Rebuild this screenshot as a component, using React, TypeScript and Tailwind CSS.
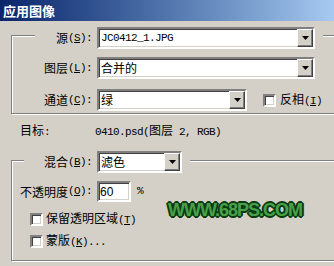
import type { ReactNode } from "react";

const mono = "font-['Liberation_Mono',monospace] text-[11px] tracking-[-0.6px]";
const face = "bg-[#d4d0c8]";
const sunken =
  "border-2 border-t-[#808080] border-l-[#808080] border-b-white border-r-white shadow-[inset_1px_1px_0_#404040,inset_-1px_-1px_0_#d4d0c8] bg-white";

function Hot({ k, tail = ")" }: { k: string; tail?: string }) {
  return (
    <span className={mono}>
      (<span className="underline underline-offset-1">{k}</span>
      {tail}
    </span>
  );
}

function Select({ w, children }: { w: string; children: ReactNode }) {
  return (
    <div className={`${w} flex h-[22px] items-stretch ${sunken}`}>
      <div className="flex flex-1 items-center overflow-hidden whitespace-nowrap pl-[2px]">
        {children}
      </div>
      <div className="flex w-[16px] items-center justify-center border border-t-white border-l-white border-b-[#404040] border-r-[#404040] bg-[#d4d0c8] shadow-[inset_-1px_-1px_0_#808080]">
        <svg width="7" height="4" viewBox="0 0 7 4">
          <path d="M0 0h7L3.5 4z" fill="#000" />
        </svg>
      </div>
    </div>
  );
}

function Check() {
  return <div className={`h-[13px] w-[13px] shrink-0 ${sunken}`} />;
}

export default function App() {
  return (
    <div className="relative h-[266px] w-[334px] overflow-hidden bg-[#d4d0c8] font-['Noto_Sans_CJK_SC',sans-serif] text-[12px] leading-none text-black">
      <div className="flex h-[21px] items-center bg-gradient-to-r from-[#0a246a] to-[#a6caf0] pl-[3px] text-[13px] font-bold text-white">
        应用图像
      </div>

      {/* source group */}
      <div className="ml-[11px] mt-[14px] h-[79px] w-[330px] border border-[#808080] shadow-[inset_1px_1px_0_#fff,1px_1px_0_#fff]">
        <div className="-mt-[9px] ml-[23px] flex h-[22px] items-center">
          <div className={`flex h-full w-[62px] items-center justify-end pr-[5px] ${face}`}>
            源<Hot k="S" tail="):" />
          </div>
          <Select w="w-[218px]">
            <span className={mono}>JC0412_1.JPG</span>
          </Select>
          <div className={`h-full w-[8px] ${face}`} />
        </div>

        <div className="ml-[23px] mt-[8px] flex h-[22px] items-center">
          <div className="flex w-[62px] items-center justify-end pr-[5px]">
            图层<Hot k="L" tail="):" />
          </div>
          <Select w="w-[218px]">合并的</Select>
        </div>

        <div className="ml-[23px] mt-[10px] flex h-[22px] items-center">
          <div className="flex w-[62px] items-center justify-end pr-[5px]">
            通道<Hot k="C" tail="):" />
          </div>
          <Select w="w-[150px]">绿</Select>
          <div className="ml-[16px]">
            <Check />
          </div>
          <span className="ml-[4px]">
            反相<Hot k="I" />
          </span>
        </div>
      </div>

      <div className="mt-[9px] flex h-[16px] items-center pl-[20px]">
        <span className="w-[75px]">
          目标<span className={mono}>:</span>
        </span>
        <span>
          <span className={mono}>0410.psd(</span>图层<span className={mono}>&nbsp;2, RGB)</span>
        </span>
      </div>

      {/* blending group */}
      <div className="ml-[11px] mt-[21px] h-[101px] w-[330px] border border-[#808080] shadow-[inset_1px_1px_0_#fff,1px_1px_0_#fff]">
        <div className="-mt-[10px] ml-[12px] flex h-[22px] items-center">
          <div className={`flex h-full w-[73px] items-center justify-end pr-[5px] ${face}`}>
            混合<Hot k="B" tail="):" />
          </div>
          <Select w="w-[85px]">滤色</Select>
          <div className={`h-full w-[8px] ${face}`} />
        </div>

        <div className="mt-[8px] flex h-[21px] items-center">
          <div className="flex w-[85px] items-center justify-end pr-[5px]">
            不透明度<Hot k="O" tail="):" />
          </div>
          <div className={`flex h-[21px] w-[34px] items-center pl-[1px] font-['Liberation_Sans',sans-serif] text-[12px] ${sunken}`}>
            60
          </div>
          <span className={`ml-[6px] ${mono}`}>%</span>
        </div>

        <div className="ml-[18px] mt-[9px] flex h-[16px] items-center">
          <Check />
          <span className="ml-[3px]">
            保留透明区域<Hot k="T" />
          </span>
        </div>

        <div className="ml-[18px] mt-[6px] flex h-[16px] items-center">
          <Check />
          <span className="ml-[3px]">
            蒙版<Hot k="K" tail=")..." />
          </span>
        </div>
      </div>

      {/* watermark */}
      <div className="absolute left-[168px] top-[201px] font-['Liberation_Sans',sans-serif] text-[18px] font-bold tracking-[-1px] text-[#4aa04a] [text-shadow:1px_0_#0a3c12,-1px_0_#0a3c12,0_1px_#0a3c12,0_-1px_#0a3c12,1px_1px_#0a3c12,-1px_-1px_#0a3c12,1px_-1px_#0a3c12,-1px_1px_#0a3c12,2px_0_#0a3c12,-2px_0_#0a3c12,0_2px_#0a3c12,0_-2px_#0a3c12]">
        WWW.68PS.COM
      </div>
    </div>
  );
}
